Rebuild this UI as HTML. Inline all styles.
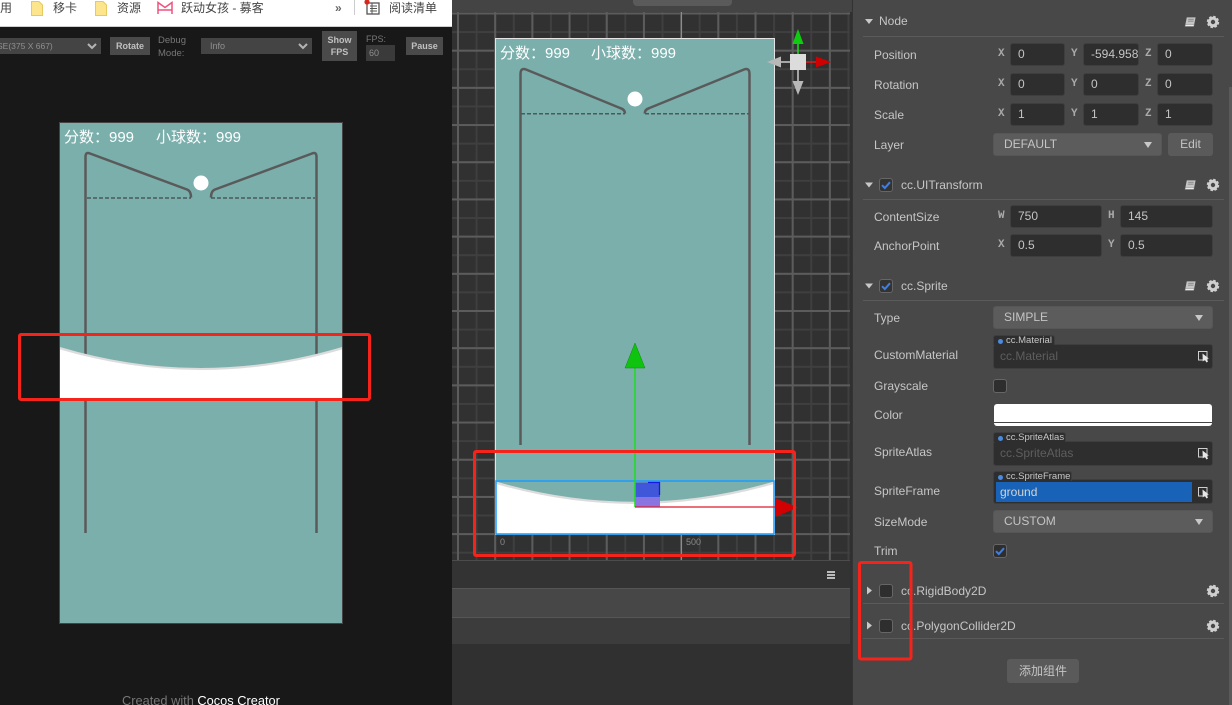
<!DOCTYPE html>
<html lang="zh">
<head>
<meta charset="utf-8">
<title>Cocos Creator</title>
<style>
html,body{margin:0;padding:0;width:1232px;height:705px;overflow:hidden;background:#181818}
body{position:relative;font-family:"Liberation Sans","Noto Sans CJK SC",sans-serif;font-size:12px;color:#bdbdbd}
.a{position:absolute;white-space:nowrap}
.t{position:absolute;white-space:nowrap;line-height:16px;height:16px}
.lb{color:#c6c6c6}
.ax{position:absolute;white-space:nowrap;font-family:"Liberation Mono",monospace;font-weight:bold;font-size:11px;color:#aaa;line-height:16px}
.in{position:absolute;box-sizing:border-box;height:23px;background:#2e2e2e;border:1px solid #3e3e3e;border-radius:3px;color:#c4c4c4;line-height:21px;padding-left:7px;overflow:hidden}
.sel{position:absolute;box-sizing:border-box;height:23px;background:#5c5c5c;border:1px solid #565656;border-radius:3px;color:#c4c4c4;line-height:21px;padding-left:10px}
.sel:after{content:"";position:absolute;right:9px;top:8px;border-left:4px solid transparent;border-right:4px solid transparent;border-top:6px solid #c8c8c8}
.div{position:absolute;left:863px;width:361px;height:1px;background:#5a5a5a}
.obj{position:absolute;box-sizing:border-box;height:25px;left:993px;width:220px;background:#2e2e2e;border:1px solid #3e3e3e;border-radius:3px;color:#5e5e5e;line-height:23px;padding-left:6px}
.tag{position:absolute;box-sizing:border-box;left:993px;height:10px;background:#2e2e2e;border:1px solid #3e3e3e;border-bottom:0;border-radius:3px 3px 0 0;font-size:9.5px;line-height:10px;color:#c8c8c8;padding-left:12px}
.tag:before{content:"";position:absolute;left:4px;top:3px;width:5px;height:5px;border-radius:50%;background:#4a8be0}
.cb{position:absolute;box-sizing:border-box;width:14px;height:14px;background:#2e2e2e;border:1px solid #666;border-radius:3px}
.tbb{position:absolute;box-sizing:border-box;background:#4a4a4a;color:#c0c0c0;font-size:9px;font-weight:bold;text-align:center}
.tsel{position:absolute;box-sizing:border-box;background:#444;color:#8f8f8f;font-size:9px;line-height:16px;height:16px}
</style>
</head>
<body>

<!-- LEFT PANEL -->
<div class="a" style="left:0;top:0;width:452px;height:705px;background:#181818"></div>
<div class="a" style="left:0;top:0;width:452px;height:26px;background:#fff;border-bottom:1px solid #cfcfcf"></div>
<span class="t" style="left:0;top:0;color:#444">用</span>
<span class="t" style="left:53px;top:0;color:#444">移卡</span>
<span class="t" style="left:117px;top:0;color:#444">资源</span>
<span class="t" style="left:181px;top:0;color:#444">跃动女孩 - 募客</span>
<span class="t" style="left:389px;top:0;color:#444">阅读清单</span>
<span class="t" style="left:335px;top:0;color:#666;font-weight:bold">»</span>
<div class="a" style="left:354px;top:0;width:1px;height:15px;background:#ccc"></div>

<div class="tsel" style="left:-14px;top:38px;width:115px;padding-left:11px;font-size:8.5px">SE(375 X 667)</div>
<div class="tbb" style="left:110px;top:37px;width:40px;height:18px;line-height:18px">Rotate</div>
<div class="a" style="left:158px;top:34px;color:#777;font-size:9.5px;line-height:13px">Debug<br>Mode:</div>
<div class="tsel" style="left:201px;top:38px;width:111px;padding-left:9px">Info</div>
<div class="tbb" style="left:322px;top:31px;width:35px;height:30px;line-height:12px;padding-top:3px">Show<br>FPS</div>
<div class="a" style="left:366px;top:33px;color:#777;font-size:9px;line-height:12px">FPS:</div>
<div class="tsel" style="left:366px;top:45px;width:29px;padding-left:3px;background:#3a3a3a">60</div>
<div class="tbb" style="left:406px;top:37px;width:37px;height:18px;line-height:18px">Pause</div>

<div class="a" style="left:122px;top:693px;font-size:12.8px;line-height:16px;color:#777">Created with <span style="color:#fff">Cocos Creator</span></div>

<div class="a" style="box-sizing:border-box;left:59px;top:122px;width:284px;height:502px;background:#7aafac;border:1px solid #444"></div>

<!-- MIDDLE PANEL -->
<div class="a" style="left:452px;top:0;width:400px;height:705px;background:#303030"></div>
<div class="a" style="left:452px;top:0;width:400px;height:12px;background:#444"></div>
<div class="a" style="left:633px;top:-8px;width:99px;height:14px;background:#5a5a5a;border-radius:4px"></div>
<div class="a" style="left:452px;top:12px;width:398px;height:548px;background-color:#313131;
background-image:linear-gradient(to right,#5c5c5c 2px,transparent 2px),linear-gradient(to bottom,#5c5c5c 2px,transparent 2px),linear-gradient(to right,#3f3f3f 2px,transparent 2px),linear-gradient(to bottom,#3f3f3f 2px,transparent 2px);
background-size:37.2px 37.2px,37.2px 37.2px,18.6px 18.6px,18.6px 18.6px;background-position:5px 0,0 0.500px,5px 0,0 0.500px"></div>
<div class="a" style="left:681px;top:12px;width:1px;height:548px;background:#8c8c8c"></div>
<div class="a" style="left:452px;top:560px;width:398px;height:1px;background:#4c4c4c"></div>
<div class="a" style="left:452px;top:561px;width:398px;height:27px;background:#333"></div>
<div class="a" style="left:452px;top:588px;width:398px;height:29px;background:#474747;border-top:1px solid #555;box-sizing:border-box"></div>
<div class="a" style="left:452px;top:617px;width:398px;height:27px;background:#3c3c3c;border-top:1px solid #555;box-sizing:border-box"></div>
<div class="a" style="left:827px;top:571px;width:8px;height:2px;background:#bbb;box-shadow:0 3px 0 #bbb,0 6px 0 #bbb"></div>

<div class="a" style="box-sizing:border-box;left:495px;top:38px;width:280px;height:497px;background:#7aafac;border:1px solid #e4e4e4;border-bottom:0"></div>

<!-- RIGHT PANEL -->
<div class="a" style="left:852px;top:0;width:380px;height:705px;background:#484848;border-left:1px solid #333;box-sizing:border-box"></div>
<div class="a" style="left:1229px;top:87px;width:3px;height:618px;background:#5a5a5a"></div>

<!-- Node -->
<span class="t lb" style="left:879px;top:13px">Node</span>
<div class="div" style="top:36px"></div>
<span class="t lb" style="left:874px;top:47px">Position</span>
<span class="t lb" style="left:874px;top:77px">Rotation</span>
<span class="t lb" style="left:874px;top:107px">Scale</span>
<span class="t lb" style="left:874px;top:137px">Layer</span>

<span class="ax" style="left:998px;top:46px">X</span><div class="in" style="left:1010px;top:43px;width:55px">0</div>
<span class="ax" style="left:1071px;top:46px">Y</span><div class="in" style="left:1083px;top:43px;width:56px">-594.958</div>
<span class="ax" style="left:1145px;top:46px">Z</span><div class="in" style="left:1157px;top:43px;width:56px">0</div>
<span class="ax" style="left:998px;top:76px">X</span><div class="in" style="left:1010px;top:73px;width:55px">0</div>
<span class="ax" style="left:1071px;top:76px">Y</span><div class="in" style="left:1083px;top:73px;width:56px">0</div>
<span class="ax" style="left:1145px;top:76px">Z</span><div class="in" style="left:1157px;top:73px;width:56px">0</div>
<span class="ax" style="left:998px;top:106px">X</span><div class="in" style="left:1010px;top:103px;width:55px">1</div>
<span class="ax" style="left:1071px;top:106px">Y</span><div class="in" style="left:1083px;top:103px;width:56px">1</div>
<span class="ax" style="left:1145px;top:106px">Z</span><div class="in" style="left:1157px;top:103px;width:56px">1</div>
<div class="sel" style="left:993px;top:133px;width:169px">DEFAULT</div>
<div class="a" style="left:1168px;top:133px;width:45px;height:23px;background:#5a5a5a;border-radius:3px;text-align:center;line-height:23px;color:#c4c4c4">Edit</div>

<!-- UITransform -->
<span class="t lb" style="left:901px;top:177px">cc.UITransform</span>
<div class="div" style="top:199px"></div>
<span class="t lb" style="left:874px;top:209px">ContentSize</span>
<span class="t lb" style="left:874px;top:238px">AnchorPoint</span>
<span class="ax" style="left:998px;top:208px">W</span><div class="in" style="left:1010px;top:205px;width:92px">750</div>
<span class="ax" style="left:1108px;top:208px">H</span><div class="in" style="left:1120px;top:205px;width:93px">145</div>
<span class="ax" style="left:998px;top:237px">X</span><div class="in" style="left:1010px;top:234px;width:92px">0.5</div>
<span class="ax" style="left:1108px;top:237px">Y</span><div class="in" style="left:1120px;top:234px;width:93px">0.5</div>

<!-- Sprite -->
<span class="t lb" style="left:901px;top:278px">cc.Sprite</span>
<div class="div" style="top:300px"></div>
<span class="t lb" style="left:874px;top:310px">Type</span>
<div class="sel" style="left:993px;top:306px;width:220px">SIMPLE</div>
<span class="t lb" style="left:874px;top:347px">CustomMaterial</span>
<div class="obj" style="top:344px">cc.Material</div>
<div class="tag" style="top:335px;width:62px">cc.Material</div>
<span class="t lb" style="left:874px;top:378px">Grayscale</span>
<div class="cb" style="left:993px;top:379px"></div>
<span class="t lb" style="left:874px;top:407px">Color</span>
<div class="a" style="left:994px;top:404px;width:218px;height:22px;background:#fff;border-radius:3px"></div>
<div class="a" style="left:994px;top:422px;width:218px;height:1px;background:#444"></div>
<span class="t lb" style="left:874px;top:444px">SpriteAtlas</span>
<div class="obj" style="top:441px">cc.SpriteAtlas</div>
<div class="tag" style="top:432px;width:73px">cc.SpriteAtlas</div>
<span class="t lb" style="left:874px;top:483px">SpriteFrame</span>
<div class="obj" style="top:479px"></div>
<div class="tag" style="top:471px;width:79px">cc.SpriteFrame</div>
<div class="a" style="left:996px;top:482px;width:196px;height:20px;background:#1862b8;color:#d4d4d4;line-height:20px;padding-left:0;text-indent:4px">ground</div>
<span class="t lb" style="left:874px;top:514px">SizeMode</span>
<div class="sel" style="left:993px;top:510px;width:220px">CUSTOM</div>
<span class="t lb" style="left:874px;top:543px">Trim</span>
<div class="cb" style="left:993px;top:544px"></div>

<!-- Rigid / Polygon -->
<div class="cb" style="left:879px;top:584px"></div>
<span class="t lb" style="left:901px;top:583px">cc.RigidBody2D</span>
<div class="div" style="top:603px"></div>
<div class="cb" style="left:879px;top:619px"></div>
<span class="t lb" style="left:901px;top:618px">cc.PolygonCollider2D</span>
<div class="div" style="top:638px"></div>
<div class="a" style="left:1007px;top:659px;width:72px;height:24px;background:#5a5a5a;border-radius:3px;text-align:center;line-height:24px;color:#c4c4c4">添加组件</div>

<div class="cb" style="left:879px;top:178px;background:#333"></div>
<div class="cb" style="left:879px;top:279px;background:#333"></div>

<!-- GRAPHICS -->
<svg class="a" style="left:0;top:0" width="1232" height="705" viewBox="0 0 1232 705" xmlns="http://www.w3.org/2000/svg">
<defs>
<symbol id="gear" viewBox="0 0 14 14" overflow="visible">
  <circle cx="7" cy="7" r="3.700" fill="none" stroke="#cfcfcf" stroke-width="3"/>
  <circle cx="7" cy="7" r="5.400" fill="none" stroke="#cfcfcf" stroke-width="1.600" stroke-dasharray="2.600 1.640"/>
</symbol>
<symbol id="book" viewBox="0 0 14 12" overflow="visible">
  <path d="M3 1H12.500L11 8.500H1.500Z" fill="#c4c4c4"/>
  <path d="M1.500 8.500H11L10.600 10.800H1Z" fill="#ececec" stroke="#777" stroke-width=".5"/>
  <path d="M4.500 3H10.500M4.200 5H10.200" stroke="#777" stroke-width=".8"/>
</symbol>
<symbol id="pick" viewBox="0 0 12 12" overflow="visible">
  <rect x=".5" y=".5" width="8.500" height="8.500" fill="none" stroke="#cfcfcf" stroke-width="1"/>
  <path d="M4.500 2.500L4.800 10.500L6.800 8.800L8.500 11.500L10 10.600L8.400 8L10.800 7.500Z" fill="#e8e8e8"/>
</symbol>
<symbol id="chk" viewBox="0 0 14 14" overflow="visible">
  <path d="M3 7.200L5.800 10L11 4.200" fill="none" stroke="#3f7fdf" stroke-width="2"/>
</symbol>
<symbol id="fold" viewBox="0 0 12 15" overflow="visible">
  <path d="M.5 .5H8L11.500 4V14.500H.5Z" fill="#fde58e" stroke="#e8c95c"/>
</symbol>
</defs>

<!-- browser icons -->
<use href="#fold" x="31" y="1" width="12" height="15"/>
<use href="#fold" x="95" y="1" width="12" height="15"/>
<path d="M158 14V2.500L165 7.500L172 2.500V14M158 10H172" fill="none" stroke="#f0517e" stroke-width="1.500"/>
<rect x="367" y="3" width="12" height="11" fill="none" stroke="#555" stroke-width="1.300"/>
<path d="M370 6H377M370 8.500H377M370 11H377M372 3V14" stroke="#555" stroke-width="1"/>
<circle cx="367" cy="2" r="2.600" fill="#d8261c"/>
<path d="M88 44L92 48L96 44" fill="none" stroke="#b5b5b5" stroke-width="2"/>
<path d="M299 44L303 48L307 44" fill="none" stroke="#b5b5b5" stroke-width="2"/>

<!-- left game -->
<g fill="none" stroke="#5a5a5a" stroke-width="2.500">
  <path d="M85.500 533V157Q85.500 151.500 90 153.500L187 189.500Q191 191 191 197.500"/>
  <path d="M316.500 533V157Q316.500 151.500 312 153.500L215 189.500Q211 191 211 197.500"/>
</g>
<path d="M87 198H191M211 198H315" stroke="#4a5a5a" stroke-width="1.500" stroke-dasharray="4 2" fill="none"/>
<circle cx="201" cy="183" r="7.500" fill="#fff"/>
<path d="M60 347Q201 389 342 347V400H60Z" fill="#dcdcdc"/>
<path d="M60 349.500Q201 390.500 342 349.500V400H60Z" fill="#fff"/>
<text x="64" y="142" font-size="15" fill="#fff" font-family="'Liberation Sans','Noto Sans CJK SC',sans-serif">分数：999</text>
<text x="156" y="142" font-size="15" fill="#fff" font-family="'Liberation Sans','Noto Sans CJK SC',sans-serif">小球数：999</text>
<rect x="19.500" y="334.500" width="350" height="65" rx="1.500" fill="none" stroke="#f5231a" stroke-width="3"/>

<!-- mid game -->
<g fill="none" stroke="#5a5a5a" stroke-width="2.500">
  <path d="M520.500 445V74Q520.500 67.500 526 69.500L620 108Q625 109.500 625 113.500"/>
  <path d="M749.500 445V74Q749.500 67.500 744 69.500L649.500 108Q644.700 109.500 644.700 113.500"/>
</g>
<path d="M521 113.800H625M645 113.800H749" stroke="#4a5a5a" stroke-width="1.500" stroke-dasharray="4 2" fill="none"/>
<circle cx="635" cy="99" r="7.500" fill="#fff"/>
<path d="M496 481.500Q635 522 774 481.500V534H496Z" fill="#dcdcdc"/>
<path d="M496 484Q635 524 774 484V534H496Z" fill="#fff"/>
<rect x="496" y="481" width="278" height="53" fill="none" stroke="#1a9cff" stroke-width="1.500"/>
<text x="500" y="58" font-size="15" fill="#fff" font-family="'Liberation Sans','Noto Sans CJK SC',sans-serif">分数：999</text>
<text x="591" y="58" font-size="15" fill="#fff" font-family="'Liberation Sans','Noto Sans CJK SC',sans-serif">小球数：999</text>
<text x="500" y="545" font-size="9" fill="#888" font-family="'Liberation Sans',sans-serif">0</text>
<text x="686" y="545" font-size="9" fill="#888" font-family="'Liberation Sans',sans-serif">500</text>

<!-- move gizmo on ground -->
<rect x="635" y="482.500" width="25" height="15" fill="#3f57d8"/>
<rect x="635" y="497" width="25" height="10" fill="#8a74e2"/>
<path d="M648 482.500H659.500V495" fill="none" stroke="#1818e0" stroke-width="1.300"/>
<path d="M635 368V507" stroke="#19e019" stroke-width="1.500"/>
<path d="M635 507H775" stroke="#e01a2a" stroke-width="1.300"/>
<path d="M635 343L645 368H625Z" fill="#0fc40f" stroke="#0a8a0a" stroke-width=".5"/>
<path d="M775 498L798 507.500L775 517Z" fill="#d20000"/>
<rect x="474.500" y="451.500" width="320" height="104" rx="1.500" fill="none" stroke="#f5231a" stroke-width="3"/>

<!-- top right gizmo -->
<path d="M798 44V54" stroke="#19e019" stroke-width="1.500"/>
<path d="M798 29L803.500 44H792.500Z" fill="#10cc10"/>
<path d="M806 62H816" stroke="#e01a1a" stroke-width="1.500"/>
<path d="M831 62L816 56.500V67.500Z" fill="#d00000"/>
<path d="M780 62H790" stroke="#ccc" stroke-width="1.500"/>
<path d="M767 62L781 56.500V67.500Z" fill="#b8b8b8"/>
<path d="M798 70V81" stroke="#ccc" stroke-width="1.500"/>
<path d="M798 95L792.500 81H803.500Z" fill="#b8b8b8"/>
<rect x="790" y="54" width="16" height="16" fill="#dcdcdc"/>

<!-- component triangles -->
<g fill="#c8c8c8">
<path d="M865 19H873L869 24Z"/>
<path d="M865 182.500H873L869 187.500Z"/>
<path d="M865 283.500H873L869 288.500Z"/>
<path d="M867 586.500L872 590.500L867 594.500Z"/>
<path d="M867 621.500L872 625.500L867 629.500Z"/>
</g>
<use href="#chk" x="879" y="178" width="14" height="14"/>
<use href="#chk" x="879" y="279" width="14" height="14"/>
<use href="#chk" x="993" y="544" width="14" height="14"/>

<use href="#book" x="1184" y="16" width="13" height="12"/>
<use href="#book" x="1184" y="179" width="13" height="12"/>
<use href="#book" x="1184" y="280" width="13" height="12"/>
<use href="#gear" x="1206" y="15" width="14" height="14"/>
<use href="#gear" x="1206" y="178" width="14" height="14"/>
<use href="#gear" x="1206" y="279" width="14" height="14"/>
<use href="#gear" x="1206" y="584" width="14" height="14"/>
<use href="#gear" x="1206" y="619" width="14" height="14"/>
<use href="#pick" x="1198" y="351" width="12" height="12"/>
<use href="#pick" x="1198" y="448" width="12" height="12"/>
<use href="#pick" x="1198" y="487" width="12" height="12"/>

<rect x="859.500" y="562.500" width="51.500" height="96.500" rx="1.500" fill="none" stroke="#f5231a" stroke-width="3"/>
</svg>

</body>
</html>
